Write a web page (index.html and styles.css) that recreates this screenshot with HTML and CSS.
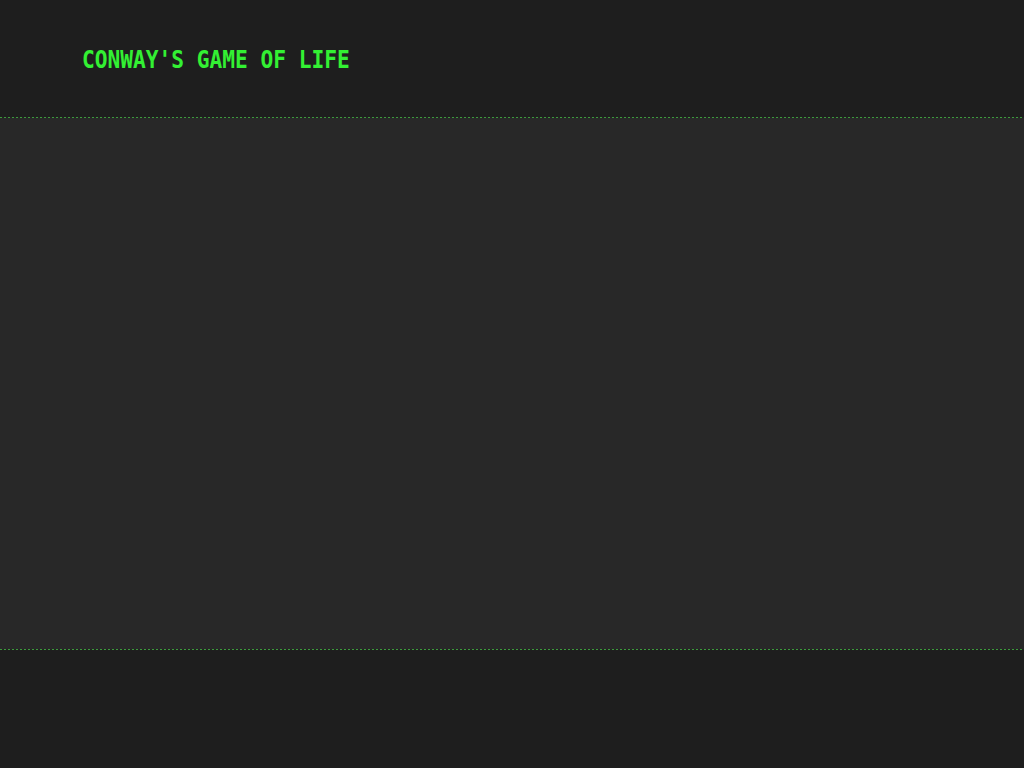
FILE: index.html
```html
<!DOCTYPE html>
<html lang="en">
<head>
<meta charset="utf-8">
<title>Conway's Game of Life</title>
<link rel="stylesheet" href="styles.css">
</head>
<body>
<div class="page">
  <header class="top">
    <h1 class="title">CONWAY'S GAME OF LIFE</h1>
  </header>
  <div class="rule"></div>
  <main class="board"></main>
  <div class="rule"></div>
  <footer class="bottom"></footer>
</div>
</body>
</html>
```

FILE: styles.css
```css
html, body {
  margin: 0;
  padding: 0;
  height: 100%;
  background: #1e1e1e;
}
.page {
  display: flex;
  flex-direction: column;
  height: 768px;
}
.top {
  height: 117px;
  display: flex;
  align-items: center;
  padding-left: 82px;
  background: #1e1e1e;
}
.title {
  margin: 0;
  font-family: "DejaVu Sans Mono", "Liberation Mono", monospace;
  font-weight: bold;
  font-size: 21.2px;
  line-height: 1;
  color: #33f033;
  display: inline-block;
  transform: scaleY(1.18);
  transform-origin: left center;
  margin-top: 2px;
}
.rule {
  flex: none;
  height: 1px;
  background-image: repeating-linear-gradient(90deg, #3c9a3c 0px, #3c9a3c 2px, #222 2px, #222 4px);
}
.board {
  height: 531px;
  flex: none;
  background: #282828;
}
.bottom {
  flex: 1;
  background: #1e1e1e;
}
```
